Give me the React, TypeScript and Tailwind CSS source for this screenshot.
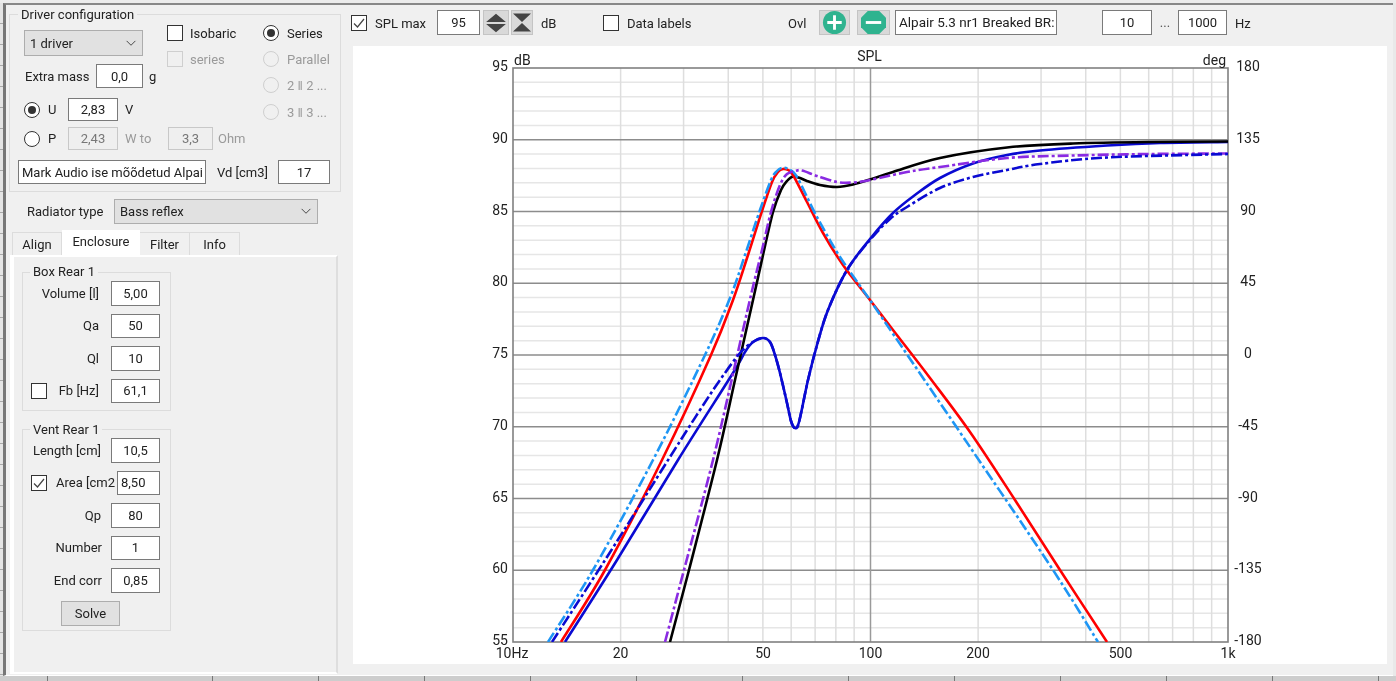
import React from "react";

type P = [number, number];

function smooth(pts: P[]): string {
  let d = `M${pts[0][0]} ${pts[0][1]}`;
  for (let i = 0; i < pts.length - 1; i++) {
    const p0 = pts[i - 1] || pts[i];
    const p1 = pts[i];
    const p2 = pts[i + 1];
    const p3 = pts[i + 2] || p2;
    const c1x = p1[0] + (p2[0] - p0[0]) / 6;
    const c1y = p1[1] + (p2[1] - p0[1]) / 6;
    const c2x = p2[0] - (p3[0] - p1[0]) / 6;
    const c2y = p2[1] - (p3[1] - p1[1]) / 6;
    d += `C${c1x.toFixed(1)} ${c1y.toFixed(1)} ${c2x.toFixed(1)} ${c2y.toFixed(1)} ${p2[0]} ${p2[1]}`;
  }
  return d;
}

const red: P[] = [[561,642],[605,570],[662,460],[711,355],[733,300],[748,255],[761,214],[772,182],[778,172],[783,169],[788,170],[793,175],[807,202],[823,233],[843,265],[870,300],[893,330],[930,378],[970,432],[1015,500],[1060,570],[1107,642]];
const sky: P[] = [[548,642],[593,570],[653,460],[705,355],[730,298],[745,255],[760,210],[771,180],[777,171],[782,168],[788,169],[797,177],[817,217],[840,257],[870,300],[887,325],[970,447],[1053,570],[1098,642]];
const black: P[] = [[670,642],[689,570],[717,460],[735,380],[753,300],[763,255],[773,212],[781,190],[787,181],[793,176.5],[800,178],[807,181],[820,185],[837,187],[853,184.5],[870,179.5],[893,172],[940,158],[1007,147.5],[1073,143.5],[1150,142],[1228,141.5]];
const purple: P[] = [[665,642],[684,570],[713,460],[735,365],[751,295],[762,250],[771,212],[780,185],[787,174],[795,171],[802,170.5],[817,176],[837,182],[853,182.5],[870,180],[907,172],[940,167],[1007,158],[1073,155.5],[1150,154],[1228,153.5]];
const blue: P[] = [[565,642],[617,560],[678,460],[733,373],[745,352],[753,342],[763,338],[770,342],[775,355],[780,373],[787,403],[791,421],[795,428],[799,422],[808,380],[817,345],[828,310],[847,270],[870,239],[893,213],[915,195],[940,178],[973,163.5],[1007,155],[1040,150.5],[1107,145.5],[1160,143],[1228,142]];
const blueDash: P[] = [[552,642],[607,557],[670,457],[700,410],[720,380],[740,353],[753,342],[763,338],[770,342],[775,355],[780,373],[787,403],[791,421],[795,428],[799,422],[808,380],[817,345],[828,310],[847,270],[870,240],[890,219],[907,207],[940,188],[973,177],[1007,170],[1040,164],[1107,157.5],[1228,154]];

const xOf = (f: number) => 513 + 357.5 * Math.log10(f / 10);
const freqs = [20,30,40,50,60,70,80,90,200,300,400,500,600,700,800,900];
const dbs = Array.from({ length: 39 }, (_, i) => 56 + i);

const leftLabels = ["95","90","85","80","75","70","65","60","55"];
const rightLabels = ["180","135","90","45","0","-45","-90","-135","-180"];
const bottomLabels: [string, number][] = [["10Hz",512],["20",620.5],["50",763],["100",870.5],["200",978],["500",1120.5],["1k",1228]];

function Chart() {
  const yOf = (db: number) => 68 + (95 - db) * 14.35;
  const dash = "11 3 3 3";
  return (
    <svg viewBox="353 46 1034 618" className="block h-full w-full" fontFamily="Roboto, sans-serif" fontSize="14" fill="#222">
      <defs>
        <clipPath id="plot"><rect x="513" y="68" width="715" height="574" /></clipPath>
      </defs>
      {dbs.map((d) => d % 5 !== 0 && <line key={d} x1="513" x2="1228" y1={yOf(d)} y2={yOf(d)} stroke="#e6e6e6" strokeWidth="1.5" />)}
      {freqs.map((f) => <line key={f} x1={xOf(f)} x2={xOf(f)} y1="68" y2="642" stroke="#dedede" strokeWidth="1.5" />)}
      {dbs.map((d) => d % 5 === 0 && <line key={d} x1="513" x2="1228" y1={yOf(d)} y2={yOf(d)} stroke="#8c8c8c" strokeWidth="1.3" />)}
      <line x1="870.5" x2="870.5" y1="68" y2="642" stroke="#9a9a9a" strokeWidth="1.5" />
      <rect x="513" y="68" width="715" height="574" fill="none" stroke="#808080" strokeWidth="1.6" />
      <g clipPath="url(#plot)" fill="none" strokeWidth="2.6" strokeLinejoin="round">
        <path d={smooth(blue)} stroke="#0a0ad2" />
        <path d={smooth(black)} stroke="#000000" />
        <path d={smooth(red)} stroke="#ff0000" />
        <path d={smooth(sky)} stroke="#1e96f5" strokeDasharray={dash} />
        <path d={smooth(purple)} stroke="#8a2be2" strokeDasharray={dash} />
        <path d={smooth(blueDash)} stroke="#0a0ad2" strokeDasharray={dash} />
      </g>
      {leftLabels.map((t, i) => <text key={t} x="508" y={71 + i * 71.75} textAnchor="end">{t}</text>)}
      {rightLabels.map((t, i) => <text key={t} x="1248" y={71 + i * 71.75} textAnchor="middle">{t}</text>)}
      {bottomLabels.map(([t, x]) => <text key={t} x={x} y="658" textAnchor="middle">{t}</text>)}
      <text x="514" y="65">dB</text>
      <text x="869.5" y="61" textAnchor="middle">SPL</text>
      <text x="1226" y="65" textAnchor="end">deg</text>
    </svg>
  );
}

function Field({ v, w = "w-[49px]", h = "h-full", disabled, left }: { v: string; w?: string; h?: string; disabled?: boolean; left?: boolean }) {
  return (
    <div className={`${w} ${h} shrink-0 flex items-center overflow-hidden whitespace-nowrap border ${left ? "justify-start pl-[3px]" : "justify-center"} ${disabled ? "border-[#c8c8c8] bg-[#efefef] text-[#777]" : "border-[#7a7a7a] bg-white"}`}>
      {v}
    </div>
  );
}

function Check({ checked, disabled }: { checked?: boolean; disabled?: boolean }) {
  return (
    <div className={`flex h-[16px] w-[16px] shrink-0 items-center justify-center border ${disabled ? "border-[#cfcfcf] bg-[#f0f0f0]" : "border-[#333] bg-white"}`}>
      {checked && (
        <svg viewBox="0 0 14 14" className="h-[14px] w-[14px]" fill="none" stroke="#444" strokeWidth="1.2">
          <path d="M2 7.5 L5.5 11 L12 3" />
        </svg>
      )}
    </div>
  );
}

function Radio({ on, disabled }: { on?: boolean; disabled?: boolean }) {
  return (
    <div className={`flex h-[16px] w-[16px] shrink-0 items-center justify-center rounded-full border ${disabled ? "border-[#cfcfcf] bg-[#f0f0f0]" : "border-[#333] bg-white"}`}>
      {on && <div className="h-[8px] w-[8px] rounded-full bg-[#333]" />}
    </div>
  );
}

function Select({ v, cls }: { v: string; cls: string }) {
  return (
    <div className={`flex shrink-0 items-center justify-between border border-[#adadad] bg-[#e1e1e1] pl-[5px] pr-[5px] ${cls}`}>
      <span>{v}</span>
      <svg viewBox="0 0 12 8" className="h-[7px] w-[12px]" fill="none" stroke="#444" strokeWidth="1.1"><path d="M1 1 L6 6 L11 1" /></svg>
    </div>
  );
}

function Row({ label, v, pr = "pr-[12px]", w, left, before }: { label: string; v: string; pr?: string; w?: string; left?: boolean; before?: React.ReactNode }) {
  return (
    <div className="flex h-[24.5px] items-center pr-[10px]">
      {before}
      <span className={`min-w-0 flex-1 whitespace-nowrap text-right ${pr}`}>{label}</span>
      <Field v={v} w={w} left={left} />
    </div>
  );
}

function ToolBtn({ w, children, ml }: { w: string; children: React.ReactNode; ml?: string }) {
  return <div className={`flex h-[25px] shrink-0 items-center justify-center border border-[#c4c4c4] bg-[#d9d9d9] ${w} ${ml ?? ""}`}>{children}</div>;
}

const sheetCols = [0, 1, 2, 3, 4, 5, 6, 7, 8, 9, 10];
const sheetRows = Array.from({ length: 32 }, (_, i) => i);

export default function App() {
  return (
    <div className="flex h-[681px] w-[1396px] flex-col overflow-hidden bg-[#e9e9e9] font-['Roboto',sans-serif] text-[13px] leading-none text-[#222] blur-[0.35px]">
      <div className="h-[3px] shrink-0 bg-[#ececec]" />
      <div className="flex h-[673px] shrink-0">
        <div className="flex w-[3px] shrink-0 flex-col bg-[#e4e4e4]">
          {sheetRows.map((r) => <div key={r} className="h-[21px] shrink-0 border-b border-[#a8a8a8]" />)}
        </div>
        <div className="flex w-[1390px] shrink-0 border-b border-l-[3px] border-t-2 border-b-white border-l-[#777] border-t-[#888] bg-[#f0f0f0]">
          {/* left column */}
          <div className="w-[334px] shrink-0 pt-[1px]">
            <fieldset className="ml-[3px] h-[186px] w-[332px] border border-[#dcdcdc]">
              <legend className="ml-[8px] h-[16px] px-[3px] leading-[18px]">Driver configuration</legend>
              <div className="flex h-[99px]">
                <div className="ml-[14px] w-[134px] shrink-0">
                  <Select v="1 driver" cls="mt-[8px] h-[26px] w-[119px]" />
                  <div className="mt-[8px] flex h-[24px] items-center">
                    <span className="ml-[1px] w-[71px] whitespace-nowrap">Extra mass</span>
                    <Field v="0,0" w="w-[47px]" />
                    <span className="ml-[6px]">g</span>
                  </div>
                  <div className="mt-[10px] flex h-[23px] items-center">
                    <Radio on />
                    <span className="ml-[8px] w-[20px]">U</span>
                    <Field v="2,83" w="w-[50px]" />
                    <span className="ml-[7px]">V</span>
                  </div>
                </div>
                <div className="ml-[9px] w-[96px] shrink-0 pt-[3px]">
                  <div className="flex h-[16px] items-center gap-[7px]"><Check /><span>Isobaric</span></div>
                  <div className="mt-[10px] flex h-[16px] items-center gap-[7px] text-[#9a9a9a]"><Check disabled /><span>series</span></div>
                </div>
                <div className="shrink-0 pt-[3px]">
                  <div className="flex h-[16px] items-center gap-[8px]"><Radio on /><span>Series</span></div>
                  <div className="mt-[10px] flex h-[16px] items-center gap-[8px] text-[#9a9a9a]"><Radio disabled /><span>Parallel</span></div>
                  <div className="mt-[10px] flex h-[16px] items-center gap-[8px] text-[#9a9a9a]"><Radio disabled /><span>2 ‖ 2 ...</span></div>
                  <div className="mt-[11px] flex h-[16px] items-center gap-[8px] text-[#9a9a9a]"><Radio disabled /><span>3 ‖ 3 ...</span></div>
                </div>
              </div>
              <div className="ml-[14px] mt-[6px] flex h-[23px] items-center">
                <Radio />
                <span className="ml-[8px] w-[20px]">P</span>
                <Field v="2,43" w="w-[50px]" disabled />
                <span className="ml-[7px] w-[43px] text-[#9a9a9a]">W to</span>
                <Field v="3,3" w="w-[45px]" disabled />
                <span className="ml-[5px] text-[#9a9a9a]">Ohm</span>
              </div>
              <div className="ml-[8px] mt-[10px] flex h-[24px] items-center">
                <Field v="Mark Audio ise mõõdetud Alpai" w="w-[188px]" left />
                <span className="ml-[11px] w-[61px] whitespace-nowrap">Vd [cm3]</span>
                <Field v="17" w="w-[52px]" />
              </div>
            </fieldset>

            <div className="ml-[21px] mt-[7px] flex h-[25px] items-center">
              <span className="w-[87px]">Radiator type</span>
              <Select v="Bass reflex" cls="h-[25px] w-[204px]" />
            </div>

            <div className="ml-[6px] mt-[6px] flex h-[25px] items-end">
              <div className="flex h-[23px] w-[50px] items-center justify-center border-l border-r border-t border-[#dcdcdc]">Align</div>
              <div className="flex h-[25px] w-[78px] items-center justify-center bg-white pb-[2px]">Enclosure</div>
              <div className="flex h-[23px] w-[50px] items-center justify-center border-r border-t border-[#dcdcdc]">Filter</div>
              <div className="flex h-[23px] w-[50px] items-center justify-center border-r border-t border-[#dcdcdc]">Info</div>
            </div>

            <div className="ml-[4px] h-[419px] w-[328px] border-b-2 border-l-4 border-r-2 border-t-2 border-b-white border-l-white border-r-[#dedede] border-t-white pl-[8px] pt-[7px]">
              <fieldset className="h-[147px] w-[149px] border border-[#dcdcdc]">
                <legend className="ml-[7px] h-[16px] px-[3px] leading-[16px]">Box Rear 1</legend>
                <div className="flex flex-col gap-[8px] pt-[1px]">
                  <Row label="Volume [l]" v="5,00" />
                  <Row label="Qa" v="50" />
                  <Row label="Ql" v="10" />
                  <Row label="Fb [Hz]" v="61,1" before={<div className="ml-[8px]"><Check /></div>} />
                </div>
              </fieldset>
              <fieldset className="mt-[10px] h-[210px] w-[149px] border border-[#dcdcdc]">
                <legend className="ml-[7px] h-[16px] px-[3px] leading-[18px]">Vent Rear 1</legend>
                <div className="flex flex-col gap-[8px] pt-[1px]">
                  <Row label="Length [cm]" v="10,5" pr="pr-[10px]" />
                  <Row label="Area [cm2" v="8,50" w="w-[43px]" pr="pr-[2px]" left before={<div className="ml-[8px]"><Check checked /></div>} />
                  <Row label="Qp" v="80" pr="pr-[10px]" />
                  <Row label="Number" v="1" pr="pr-[9px]" />
                  <Row label="End corr" v="0,85" pr="pr-[9px]" />
                </div>
                <div className="ml-[38px] mt-[8px] flex h-[25px] w-[59px] items-center justify-center border border-[#adadad] bg-[#e1e1e1]">Solve</div>
              </fieldset>
            </div>
          </div>

          {/* right column */}
          <div className="min-w-0 flex-1">
            <div className="flex h-[41px] items-start pl-[11px] pt-[5px]">
              <div className="flex h-[25px] shrink-0 items-center"><Check checked /></div>
              <span className="ml-[8px] flex h-[25px] w-[62px] shrink-0 items-center whitespace-nowrap pt-[2px]">SPL max</span>
              <div className="h-[25px]"><Field v="95" w="w-[43px]" /></div>
              <ToolBtn w="w-[26px]" ml="ml-[3px]">
                <svg viewBox="0 0 20 20" className="h-[22px] w-[22px]" fill="#444"><path d="M10 1.5 L19 9 H1 Z M1 11 H19 L10 18.5 Z" /></svg>
              </ToolBtn>
              <ToolBtn w="w-[22px]" ml="ml-[2px]">
                <svg viewBox="0 0 20 20" className="h-[21px] w-[20px]" fill="#444"><path d="M1 1 H19 L10 9.5 Z M10 10.5 L19 19 H1 Z" /></svg>
              </ToolBtn>
              <span className="ml-[8px] flex h-[25px] w-[62px] shrink-0 items-center pt-[2px]">dB</span>
              <div className="flex h-[25px] shrink-0 items-center"><Check /></div>
              <span className="ml-[8px] flex h-[25px] w-[161px] shrink-0 items-center whitespace-nowrap pt-[2px]">Data labels</span>
              <span className="flex h-[25px] w-[31px] shrink-0 items-center pt-[2px]">Ovl</span>
              <ToolBtn w="w-[31px]">
                <svg viewBox="0 0 26 26" className="h-[25px] w-[25px]"><circle cx="13" cy="13" r="12" fill="#2fb38f" /><path d="M13 5.5 V20.5 M5.5 13 H20.5" stroke="#fff" strokeWidth="3" /></svg>
              </ToolBtn>
              <ToolBtn w="w-[33px]" ml="ml-[7px]">
                <svg viewBox="0 0 28 26" className="h-[25px] w-[27px]"><path d="M8 1 H20 L27 8 V18 L20 25 H8 L1 18 V8 Z" fill="#2fb38f" /><path d="M6 13 H22" stroke="#fff" strokeWidth="3" /></svg>
              </ToolBtn>
              <div className="ml-[5px] h-[25px]"><Field v="Alpair 5.3 nr1 Breaked BR:" w="w-[162px] text-[13.5px]" left /></div>
              <div className="ml-[45px] h-[25px]"><Field v="10" w="w-[50px]" /></div>
              <span className="flex h-[25px] w-[26px] shrink-0 items-center justify-center text-[#555]">...</span>
              <div className="h-[25px]"><Field v="1000" w="w-[49px]" /></div>
              <span className="ml-[8px] flex h-[25px] shrink-0 items-center pt-[2px]">Hz</span>
            </div>
            <div className="ml-[13px] h-[618px] w-[1034px] bg-white">
              <Chart />
            </div>
          </div>
        </div>
        <div className="min-w-0 flex-1 bg-[#e9e9e9]" />
      </div>
      <div className="flex h-[5px] shrink-0 bg-[#cdcdcd]">
        <div className="h-full w-[48px] shrink-0 border-r border-[#777]" />
        <div className="h-full w-[165px] shrink-0 border-r border-[#777]" />
        {sheetCols.map((c) => <div key={c} className="h-full w-[106px] shrink-0 border-r border-[#777]" />)}
      </div>
    </div>
  );
}
